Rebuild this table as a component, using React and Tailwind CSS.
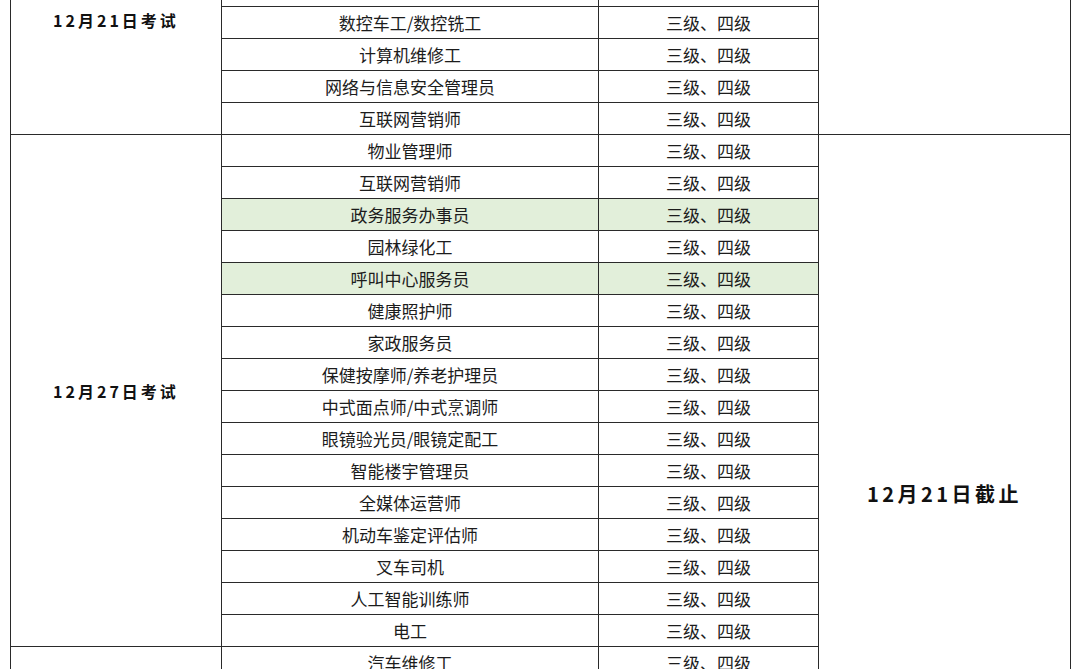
import React from 'react';

const LEVEL = '三级、四级';

const sectionOne = ['焊工', '电子商务师', '企业人力资源管理师', '数控车工/数控铣工', '计算机维修工', '网络与信息安全管理员', '互联网营销师'];

const sectionTwo = [
    { name: '物业管理师' },
    { name: '互联网营销师' },
    { name: '政务服务办事员', green: true },
    { name: '园林绿化工' },
    { name: '呼叫中心服务员', green: true },
    { name: '健康照护师' },
    { name: '家政服务员' },
    { name: '保健按摩师/养老护理员' },
    { name: '中式面点师/中式烹调师' },
    { name: '眼镜验光员/眼镜定配工' },
    { name: '智能楼宇管理员' },
    { name: '全媒体运营师' },
    { name: '机动车鉴定评估师' },
    { name: '叉车司机' },
    { name: '人工智能训练师' },
    { name: '电工' },
];

const sectionThree = ['汽车维修工', '美容师', '美发师', '中药调剂员', '电梯安装维修工', '育婴员'];

const cell = 'border border-[#2a2a2a] h-[32px] p-0 text-center align-middle';
const nameCell = cell + ' text-[17px] text-[#1c1c1c]';
const labelCell = cell + ' font-bold text-[16px] tracking-[3px] text-[#111]';

export default function App() {
    return (
        <div
            className="w-[1080px] h-[669px] overflow-hidden bg-white"
            style={{ fontFamily: '"Noto Sans CJK SC", "Noto Sans", sans-serif' }}
        >
            <table className="ml-[10px] -mt-[90px] w-[1060px] table-fixed border-collapse">
                <colgroup>
                    <col className="w-[211px]" />
                    <col className="w-[377px]" />
                    <col className="w-[220px]" />
                    <col className="w-[252px]" />
                </colgroup>
                <tbody>
                    {sectionOne.map((name, i) => (
                        <tr key={'a' + i}>
                            {i === 0 && (
                                <td rowSpan={sectionOne.length} className={labelCell + ' pb-[6px]'}>
                                    12月21日考试
                                </td>
                            )}
                            <td className={nameCell}>{name}</td>
                            <td className={nameCell}>{LEVEL}</td>
                            {i === 0 && <td rowSpan={sectionOne.length} className={cell}></td>}
                        </tr>
                    ))}
                    {sectionTwo.map((row, i) => (
                        <tr key={'b' + i}>
                            {i === 0 && (
                                <td rowSpan={sectionTwo.length} className={labelCell}>
                                    12月27日考试
                                </td>
                            )}
                            <td className={nameCell + (row.green ? ' bg-[#e2efda]' : '')}>{row.name}</td>
                            <td className={nameCell + (row.green ? ' bg-[#e2efda]' : '')}>{LEVEL}</td>
                            {i === 0 && (
                                <td
                                    rowSpan={sectionTwo.length + 6}
                                    className={cell + ' font-bold text-[20px] tracking-[3.5px] text-[#111] pt-[14px]'}
                                >
                                    12月21日截止
                                </td>
                            )}
                        </tr>
                    ))}
                    {sectionThree.map((name, i) => (
                        <tr key={'c' + i}>
                            {i === 0 && (
                                <td rowSpan={sectionThree.length} className={labelCell}>
                                    1月3日考试
                                </td>
                            )}
                            <td className={nameCell}>{name}</td>
                            <td className={nameCell}>{LEVEL}</td>
                        </tr>
                    ))}
                </tbody>
            </table>
        </div>
    );
}
